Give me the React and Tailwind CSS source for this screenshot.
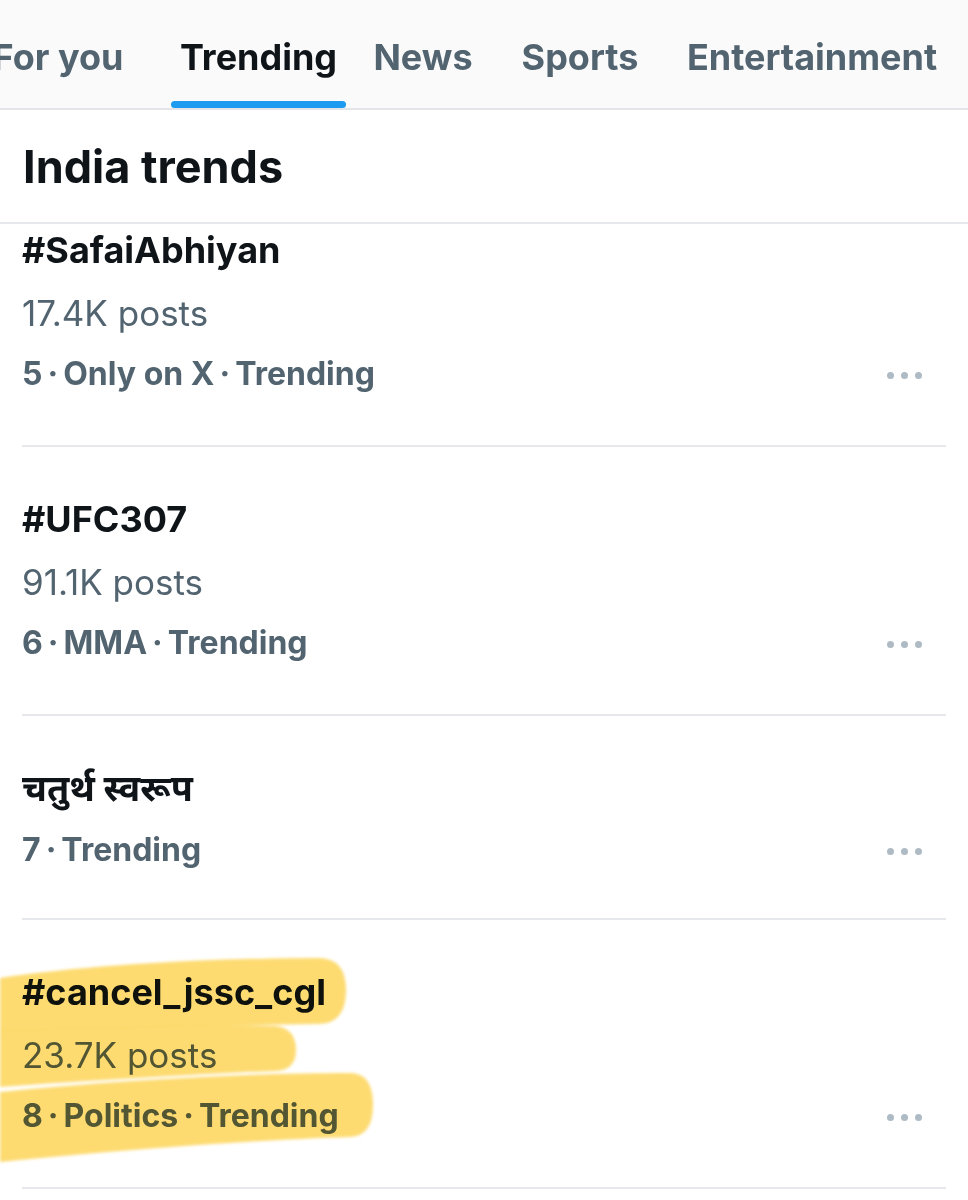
import React from "react";

const tabs = [
    { label: "For you", box: "w-[128px] -ml-[6px]" },
    { label: "Trending", box: "w-[175px] ml-[49px]", active: true },
    { label: "News", box: "w-[106px] ml-[24px]" },
    { label: "Sports", box: "w-[140px] ml-[34px]" },
    { label: "Entertainment", box: "w-[272px] ml-[26px]" },
];

const sep = "\u2009·\u2009";

const trends = [
    { title: "#SafaiAbhiyan", posts: "17.4K posts", meta: ["5", "Only on X", "Trending"], first: true },
    { title: "#UFC307", posts: "91.1K posts", meta: ["6", "MMA", "Trending"] },
    { title: "चतुर्थ स्वरूप", meta: ["7", "Trending"] },
    { title: "#cancel_jssc_cgl", posts: "23.7K posts", meta: ["8", "Politics", "Trending"], marked: true },
];

function Dots() {
    return (
        <div className="flex items-center gap-[7px] pr-[24px] pt-[4px]">
            <span className="w-[7px] h-[7px] rounded-full bg-[#aebbc4]" />
            <span className="w-[7px] h-[7px] rounded-full bg-[#aebbc4]" />
            <span className="w-[7px] h-[7px] rounded-full bg-[#aebbc4]" />
        </div>
    );
}

// yellow marker strokes drawn over the last trend
function Marker() {
    return (
        <svg
            className="absolute -left-[22px] top-0 w-[400px] h-[268px] mix-blend-multiply pointer-events-none"
            viewBox="0 0 400 268"
        >
            <defs>
                <filter id="soft" x="-5%" y="-5%" width="110%" height="110%">
                    <feGaussianBlur stdDeviation="1.4" />
                </filter>
            </defs>
            <g fill="#fdd65e" fillOpacity="0.88" filter="url(#soft)">
                <path d="M0,58 C80,46 200,38 318,38 Q346,38 346,70 Q346,104 318,104 C200,106 80,108 0,112 Z" />
                <path d="M0,111 C100,107 200,104 275,106 Q296,108 296,130 Q296,150 276,151 C200,154 100,160 0,167 Z" />
                <path d="M0,172 C120,160 250,153 350,153 Q373,153 373,185 Q373,216 350,217 C250,220 120,230 0,242 Z" />
            </g>
        </svg>
    );
}

function Trend({ t }) {
    return (
        <div
            className={`relative mx-[22px] border-b-2 border-[#e6e8eb] ${t.first ? "-mt-[6px]" : "pt-[40px]"} ${
                t.posts ? "pb-[42px]" : "pb-[39px]"
            }`}
        >
            <div className="h-[64px] leading-[64px] text-[36px] font-bold text-[#0f1419] whitespace-nowrap">{t.title}</div>
            {t.posts && <div className="h-[62px] leading-[62px] text-[35px] text-[#536471]">{t.posts}</div>}
            <div className="h-[59px] flex items-center justify-between leading-[59px]">
                <span className="text-[32px] font-bold text-[#536471]">{t.meta.join(sep)}</span>
                <Dots />
            </div>
            {t.marked && <Marker />}
        </div>
    );
}

export default function App() {
    return (
        <div className="w-[968px] h-[1200px] overflow-hidden bg-white" style={{ fontFamily: "Inter, 'Noto Sans', 'Noto Sans Devanagari', sans-serif" }}>
            <div className="bg-[#fafafb] border-b-2 border-[#e3e5e8]">
                <div className="flex h-[108px] whitespace-nowrap">
                    {tabs.map((tab) => (
                        <div key={tab.label} className={`${tab.box} shrink-0 flex flex-col items-center`}>
                            <div
                                className={`h-[101px] pt-[12px] flex items-center text-[36px] font-bold ${
                                    tab.active ? "text-[#0f1419]" : "text-[#536471]"
                                }`}
                            >
                                {tab.label}
                            </div>
                            {tab.active && <div className="w-full h-[7px] rounded-full bg-[#1d9bf0]" />}
                        </div>
                    ))}
                </div>
            </div>
            <div className="h-[114px] flex items-center px-[23px] border-b-2 border-[#e6e8eb]">
                <h1 className="text-[45px] font-bold text-[#0f1419] leading-none">India trends</h1>
            </div>
            {trends.map((t) => (
                <Trend key={t.title} t={t} />
            ))}
        </div>
    );
}
